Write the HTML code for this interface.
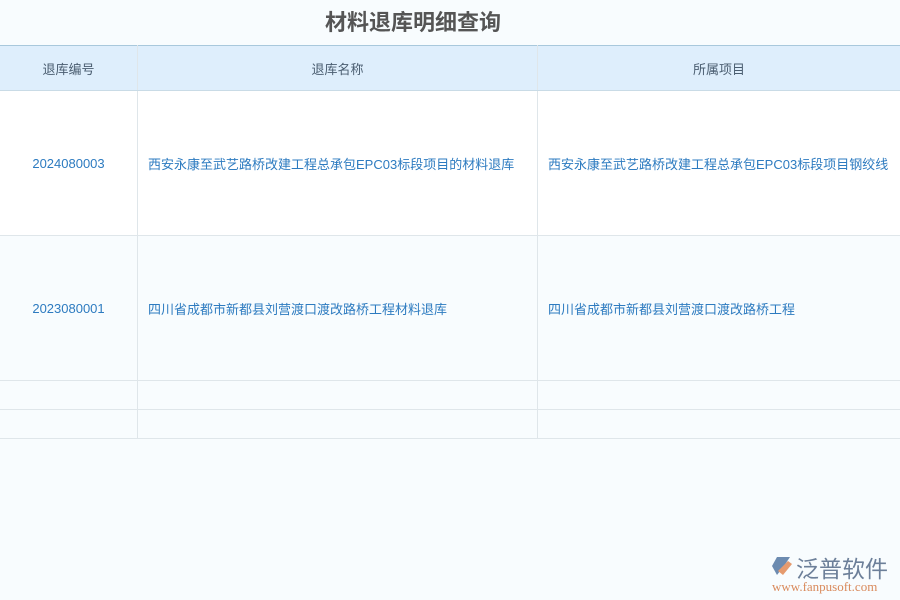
<!DOCTYPE html><html><head><meta charset="utf-8"><style>
body{margin:0;width:900px;height:600px;background:#f8fcfe;font-family:"Liberation Sans","Noto Sans CJK SC",sans-serif;position:relative;overflow:hidden}
.t{position:absolute;left:325px;top:5px;font-size:22px;font-weight:bold;color:#555}
table{position:absolute;top:45px;left:0;width:900px;border-collapse:collapse;font-size:13px}
td,th{border:1px solid #dfe6ea;padding:0}
th{background:#deeefc;color:#4a5d70;font-weight:normal;height:44px;border-top:1px solid #a8c8dc;border-bottom:1px solid #c9dbe6}
td{color:#2d7bc0;height:144px}
tr.e td{height:28px}
td.c{text-align:center}
td.l{padding-left:10px}
tr.w td{background:#fff}
</style></head><body>
<div class="t">材料退库明细查询</div>
<table>
<tr><th style="width:137px;border-left:none">退库编号</th><th style="width:399px">退库名称</th><th style="border-right:none">所属项目</th></tr>
<tr class="w"><td class="c" style="border-left:none">2024080003</td><td class="l">西安永康至武艺路桥改建工程总承包EPC03标段项目的材料退库</td><td class="l" style="border-right:none">西安永康至武艺路桥改建工程总承包EPC03标段项目钢绞线</td></tr>
<tr><td class="c" style="border-left:none">2023080001</td><td class="l">四川省成都市新都县刘营渡口渡改路桥工程材料退库</td><td class="l" style="border-right:none">四川省成都市新都县刘营渡口渡改路桥工程</td></tr>
<tr class="e"><td style="border-left:none"></td><td></td><td style="border-right:none"></td></tr>
<tr class="e"><td style="border-left:none"></td><td></td><td style="border-right:none"></td></tr>
</table>
<div style="position:absolute;left:770px;top:555px;width:24px;height:22px">
<svg width="24" height="22"><polygon points="2,11 7,2 20,2 14,11 7,20" fill="#6c8bb0"/><path d="M8,16 L18,6 L22,9 L13,20Z" fill="#e59a6e"/></svg></div>
<div style="position:absolute;left:796px;top:550px;font-size:23px;color:#6c7f99">泛普软件</div>
<div style="position:absolute;left:772px;top:579px;font-size:13px;color:#d98a5c;font-family:'Liberation Serif',serif">www.fanpusoft.com</div>
</body></html>
